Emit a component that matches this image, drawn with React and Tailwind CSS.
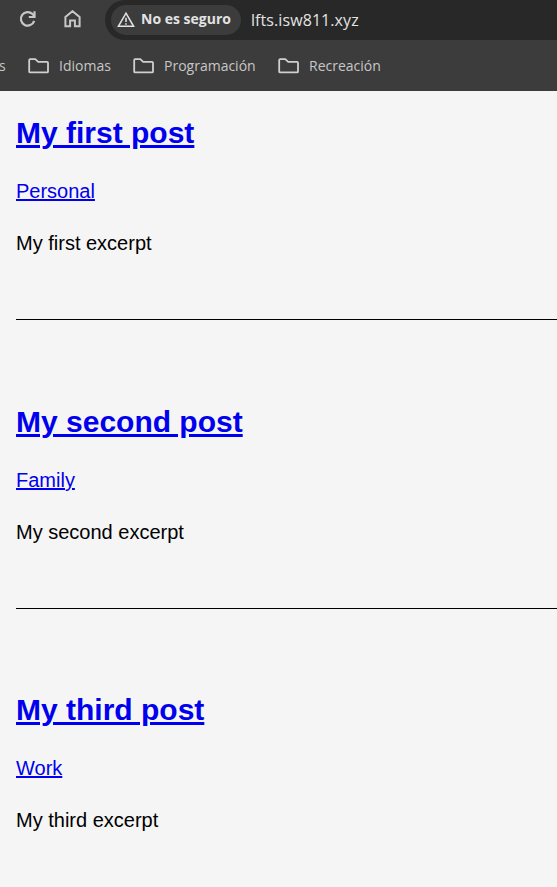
const posts = [
  { title: 'My first post', category: 'Personal', excerpt: 'My first excerpt', box: 'h-[229px] pt-[25px]', divider: true },
  { title: 'My second post', category: 'Family', excerpt: 'My second excerpt', box: 'h-[289px] pt-[85px]', divider: true },
  { title: 'My third post', category: 'Work', excerpt: 'My third excerpt', box: 'h-[278px] pt-[84px]', divider: false },
];

function Folder() {
  return (
    <svg className="h-[18px] w-[22px] shrink-0" viewBox="0 0 22 18" fill="none" stroke="#d0d0d0" strokeWidth="1.8" strokeLinejoin="round">
      <path d="M1.2 14.4V3.2Q1.2 2.2 2.2 2.2H7.3L10.2 4.8H19Q20 4.8 20 5.8V14.4Q20 15.4 19 15.4H2.2Q1.2 15.4 1.2 14.4Z" />
    </svg>
  );
}

function Bookmark({ label, className }) {
  return (
    <div className={'flex shrink-0 items-center ' + className}>
      <Folder />
      <span className="ml-[9px] whitespace-nowrap">{label}</span>
    </div>
  );
}

export default function App() {
  return (
    <div className="h-[887px] w-[557px] overflow-hidden bg-[#f5f5f5] font-['Liberation_Sans',Arial,sans-serif]">
      <header className="h-[91px] overflow-hidden bg-[#3c3c3c] font-['Open_Sans','Noto_Sans',sans-serif]">
        <div className="flex h-10 items-center">
          <svg className="ml-[18px] h-5 w-5 shrink-0" viewBox="0 0 20 20" fill="none" stroke="#c7c7c7" strokeWidth="2.2">
            <path d="M16.2 10.9A6.8 6.8 0 1 1 14.5 4L16.2 5.8" />
            <path d="M16.5 1.2V7H10.8" />
          </svg>
          <svg className="ml-[25px] h-5 w-5 shrink-0" viewBox="0 0 20 20" fill="none" stroke="#c7c7c7" strokeWidth="2">
            <path d="M2.4 16.3V7L9.5 1.2L16.6 7V16.3H11.9V10.5H7.1V16.3Z" />
          </svg>
          <div className="ml-[22px] flex h-10 w-[480px] shrink-0 items-center rounded-l-[20px] bg-[#282828] pl-[6px]">
            <div className="flex h-[30px] w-[130px] items-center rounded-full bg-[#3c3c3c] pl-[6px]">
              <svg className="h-[18px] w-[18px] shrink-0" viewBox="0 0 18 18" fill="none" stroke="#e3e3e3" strokeWidth="1.5">
                <path d="M9 2.2L16.6 15.3H1.4Z" />
                <path d="M9 6.8V11.1M9 12.2V13.7" />
              </svg>
              <span className="ml-[6px] whitespace-nowrap pb-[2px] text-[14px] font-bold leading-5 text-[#e3e3e3]">No es seguro</span>
            </div>
            <span className="ml-[10px] whitespace-nowrap text-[16px] leading-6 tracking-[0.08px] text-[#e3e3e3]">lfts.isw811.xyz</span>
          </div>
        </div>
        <nav className="flex h-[51px] items-center text-[14px] leading-5 text-[#c7c7c7]">
          <span className="w-7 shrink-0 -indent-px">s</span>
          <Bookmark label="Idiomas" className="w-[105px]" />
          <Bookmark label="Programación" className="w-[145px]" />
          <Bookmark label="Recreación" className="w-[120px]" />
        </nav>
      </header>
      <main className="pl-4">
        {posts.map((post) => (
          <article key={post.title} className={post.box + (post.divider ? ' border-b border-black' : '')}>
            <h1 className="text-[30px] font-bold leading-[34px] text-[#0000ee]">
              <a className="underline" href="#">{post.title}</a>
            </h1>
            <p className="mt-[30px] text-[20px] leading-[23px] text-[#0000ee]">
              <a className="underline" href="#">{post.category}</a>
            </p>
            <p className="mt-[29px] text-[20px] leading-[23px] text-black">{post.excerpt}</p>
          </article>
        ))}
      </main>
    </div>
  );
}
